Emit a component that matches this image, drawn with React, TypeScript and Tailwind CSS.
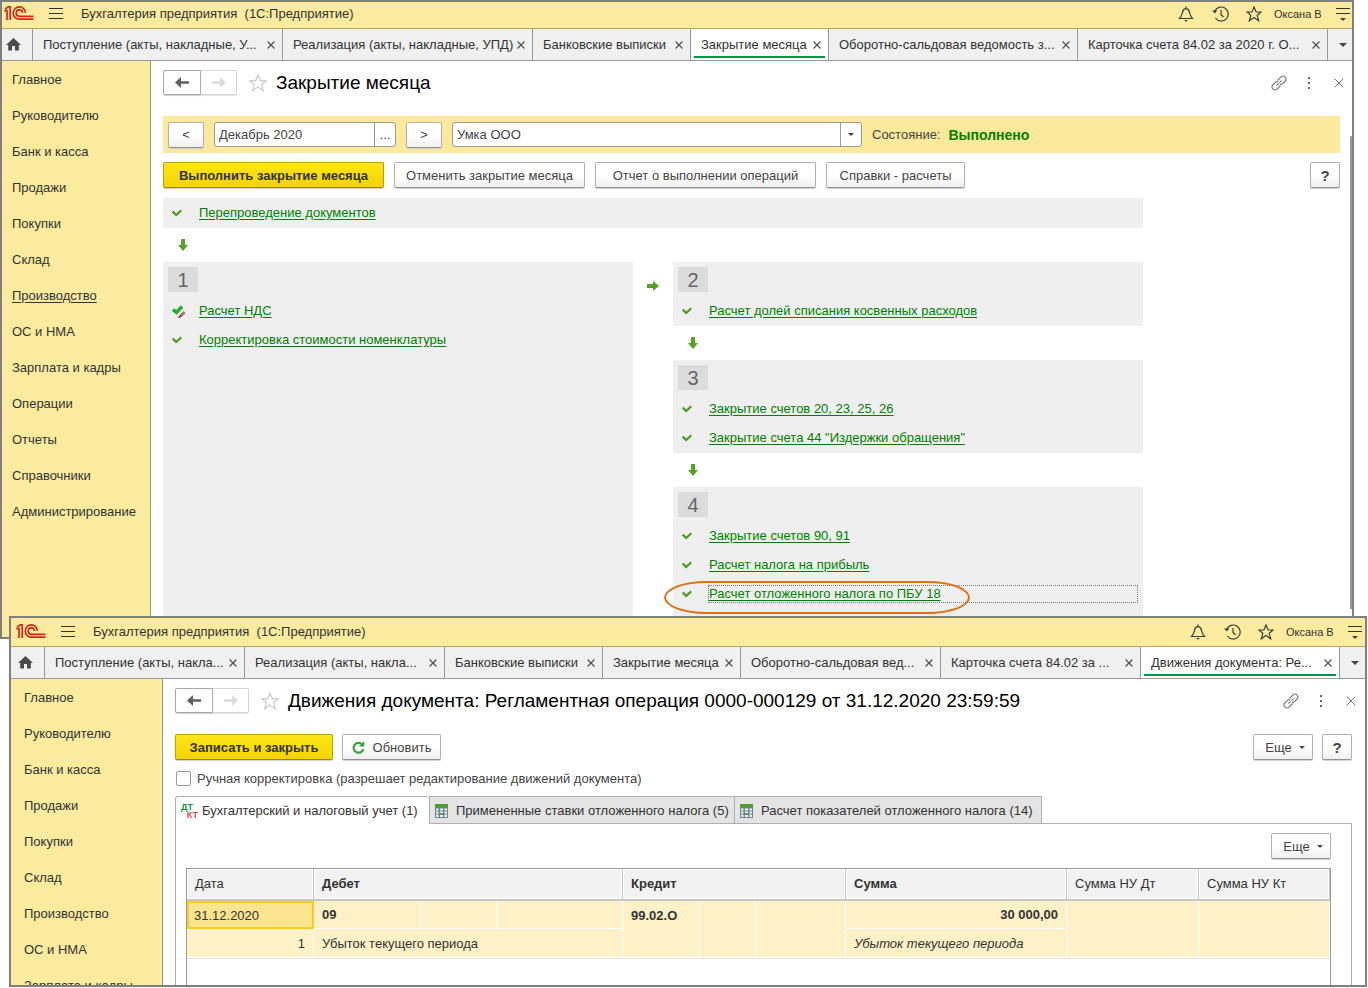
import type { ReactNode } from 'react'

const sections = [
    'Главное',
    'Руководителю',
    'Банк и касса',
    'Продажи',
    'Покупки',
    'Склад',
    'Производство',
    'ОС и НМА',
    'Зарплата и кадры',
    'Операции',
    'Отчеты',
    'Справочники',
    'Администрирование',
]

type Tab = { title: string; width: string; active?: boolean }

const closingTabs: Tab[] = [
    { title: 'Поступление (акты, накладные, У...', width: 'w-[250px]' },
    { title: 'Реализация (акты, накладные, УПД)', width: 'w-[250px]' },
    { title: 'Банковские выписки', width: 'w-[158px]' },
    { title: 'Закрытие месяца', width: 'w-[138px]', active: true },
    { title: 'Оборотно-сальдовая ведомость з...', width: 'w-[249px]' },
    { title: 'Карточка счета 84.02 за 2020 г. О...', width: 'w-[250px]' },
]

const documentTabs: Tab[] = [
    { title: 'Поступление (акты, накла...', width: 'w-[200px]' },
    { title: 'Реализация (акты, накла...', width: 'w-[200px]' },
    { title: 'Банковские выписки', width: 'w-[158px]' },
    { title: 'Закрытие месяца', width: 'w-[138px]' },
    { title: 'Оборотно-сальдовая вед...', width: 'w-[200px]' },
    { title: 'Карточка счета 84.02 за ...', width: 'w-[200px]' },
    { title: 'Движения документа: Ре...', width: 'w-[199px]', active: true },
]

const Logo = () => (
    <svg width="30" height="15" viewBox="0 0 30 15" fill="none" stroke="#d9261c" strokeWidth="1.7">
        <path d="M.2 4.6H3V14M1.200 3.200L4.200 .9H6.200V14" />
        <path d="M21.400 6.900A6.100 6.100 0 1 0 15.300 13.100H29.500" />
        <path d="M18.600 6.900A3.200 3.200 0 1 0 15.300 10.300H29.500" />
    </svg>
)

const Home = () => (
    <svg width="15" height="13" viewBox="0 0 15 13" fill="#4a4a4a">
        <path d="M7.5 0L15 7H12.8V12.5H9V8H6V12.5H2.2V7H0L7.5 0Z" />
    </svg>
)

const Bell = () => (
    <svg width="16" height="16" viewBox="0 0 16 16" fill="none" stroke="#3d3d3d" strokeWidth="1.2">
        <path d="M8 .5V2.5M1.500 12.500H14.500C12.200 10 12 8.500 11.400 6C10.900 3.800 9.600 2.700 8 2.700S5.100 3.800 4.600 6C4 8.500 3.800 10 1.500 12.500Z" />
        <path d="M6 14H10L8 15.800Z" fill="#3d3d3d" stroke="none" />
    </svg>
)

const History = () => (
    <svg width="17" height="16" viewBox="0 0 17 16" fill="none" stroke="#3d3d3d" strokeWidth="1.2">
        <path d="M2.600 5.600A7 7 0 1 1 3.400 12M9 4V8.500L11.500 11" />
        <path d="M0 4.500L5.200 4.200L3 7.600Z" fill="#3d3d3d" stroke="none" />
    </svg>
)

const Star = ({ size, color }: { size: number; color: string }) => (
    <svg width={size} height={size} viewBox="0 0 16 16" fill="none" stroke={color} strokeWidth="1.2">
        <path d="M8 1L10.100 6H15.200L11.200 9.300L12.700 14.800L8 11.600L3.300 14.800L4.800 9.300L.8 6H5.900Z" />
    </svg>
)

const Cross = ({ size, color, weight }: { size: number; color: string; weight: number }) => (
    <svg width={size} height={size} viewBox="0 0 10 10" stroke={color} strokeWidth={weight}>
        <path d="M.7 .7L9.300 9.300M9.300 .7L.7 9.300" />
    </svg>
)

const Caret = ({ size }: { size: number }) => (
    <svg width={size} height={size / 2} viewBox="0 0 10 5" fill="#444">
        <path d="M0 0H10L5 5Z" />
    </svg>
)

const NavArrow = ({ back }: { back?: boolean }) => (
    <svg width="14" height="11" viewBox="0 0 14 11" fill={back ? '#5f5f5f' : '#dcdcdc'}>
        <path d={back ? 'M0 5.500L6 0V4.300H14V6.700H6V11Z' : 'M14 5.500L8 0V4.300H0V6.700H8V11Z'} />
    </svg>
)

const Chain = () => (
    <svg width="16" height="16" viewBox="0 0 16 16" fill="none" stroke="#7a7a7a" strokeWidth="1.200">
        <path d="M5.500 10.500L10.500 5.500" strokeDasharray="3 1" />
        <path d="M6.500 5.500L10 1.900C11 .9 12.700 .5 14 1.900C15.500 3.200 15.200 5 14.200 6L11.800 8.400C11 9.200 10 9.500 9 9.100" />
        <path d="M9.500 10.500L6 14.100C5 15.100 3.300 15.500 2 14.100C.5 12.800 .8 11 1.800 10L4.200 7.600C5 6.800 6 6.500 7 6.900" />
    </svg>
)

const Check = () => (
    <svg width="10" height="8" viewBox="0 0 10 8" fill="none" stroke="#4a9a22" strokeWidth="2.200">
        <path d="M.7 2.600L4.200 6L9.300 1.200" />
    </svg>
)

const ManualCheck = () => (
    <svg width="14" height="13" viewBox="0 0 14 13" fill="none">
        <path d="M1 4.500L4.500 7.500L10 1.500" stroke="#1fae2f" strokeWidth="3.400" />
        <path d="M8.500 11L12.600 7.200" stroke="#a5765c" strokeWidth="3" />
        <path d="M6.600 12.800L9 10.600" stroke="#4a3a33" strokeWidth="1.600" />
    </svg>
)

const DownArrow = () => (
    <svg width="10" height="12" viewBox="0 0 10 12" fill="#55a321">
        <path d="M3 0H7V6H10L5 12L0 6H3Z" />
    </svg>
)

const RightArrow = () => (
    <svg width="12" height="10" viewBox="0 0 12 10" fill="#55a321">
        <path d="M0 3H6V0L12 5L6 10V7H0Z" />
    </svg>
)

const Refresh = () => (
    <svg width="13" height="13" viewBox="0 0 13 13" fill="none">
        <path d="M10 3.200A4.900 4.900 0 1 0 11.300 8" stroke="#37a23c" strokeWidth="2.200" />
        <path d="M12.300 0V5.600H6.800Z" fill="#37a23c" />
    </svg>
)

const Sheet = () => (
    <svg width="13" height="14" viewBox="0 0 13 14" className="shrink-0">
        <path d="M0 0H13V14H0Z" fill="#6f8596" />
        <path d="M1 4.500H3.500V6.500H1ZM5 4.500H8V6.500H5ZM9.500 4.500H12V6.500H9.500ZM1 7.500H3.500V9.500H1ZM5 7.500H8V9.500H5ZM9.500 7.500H12V9.500H9.500ZM1 10.500H3.500V13H1ZM5 11H8V13H5ZM9.500 10.500H12V13H9.500Z" fill="#eef3f7" />
        <path d="M0 0H13V3.500H0ZM4.500 9H8.500V10.500H4.500Z" fill="#4f9f2c" />
    </svg>
)

const DebitCredit = () => (
    <span className="flex w-[17px] flex-col text-left text-[9px] leading-[8px] font-bold">
        <span className="text-[#0c9248]">ДТ</span>
        <span className="self-end text-[#dc4a48]">КТ</span>
    </span>
)

const Button = ({ children, className = '', label }: { children: ReactNode; className?: string; label?: string }) => (
    <button
        type="button"
        aria-label={label}
        className={`flex items-center justify-center h-[26px] shrink-0 rounded-[2px] border border-[#b0b0b0] border-b-[#929292] bg-linear-to-b from-white from-50% to-[#f0f0f0] pt-px shadow-[0_1px_1px_#d0d0d0] whitespace-nowrap text-[#444] ${className}`}
    >
        {children}
    </button>
)

const PrimaryButton = ({ children, className }: { children: ReactNode; className: string }) => (
    <button
        type="button"
        className={`h-[26px] shrink-0 rounded-[2px] border border-[#b8a000] border-b-[#9c8800] bg-linear-to-b from-[#ffe617] to-[#f3d300] pt-px shadow-[0_1px_1px_#d0d0d0] whitespace-nowrap font-bold text-[#333] ${className}`}
    >
        {children}
    </button>
)

const TitleBar = ({ className }: { className: string }) => (
    <header className={`flex items-center border-b border-[#b5a569] bg-[#fbeb9e] ${className}`}>
        <Logo />
        <button type="button" aria-label="Главное меню" className="ml-[15px] flex w-[14px] flex-col gap-1">
            <span className="h-px bg-[#333]"></span>
            <span className="h-px bg-[#333]"></span>
            <span className="h-px bg-[#333]"></span>
        </button>
        <span className="ml-[18px] whitespace-pre">Бухгалтерия предприятия  (1С:Предприятие)</span>
        <div className="ml-auto flex items-center">
            <button type="button" aria-label="Уведомления"><Bell /></button>
            <button type="button" aria-label="История" className="ml-[18px]"><History /></button>
            <button type="button" aria-label="Избранное" className="ml-[17px]"><Star size={16} color="#3d3d3d" /></button>
            <span className="ml-3 w-12 whitespace-nowrap text-[11px]">Оксана В</span>
            <button type="button" aria-label="Настройки" className="ml-[14px] flex w-[14px] flex-col items-center gap-1 pt-[2px]">
                <span className="h-px w-full bg-[#333]"></span>
                <span className="h-px w-full bg-[#333]"></span>
                <Caret size={6} />
            </button>
        </div>
    </header>
)

const TabBar = ({ tabs, homeWidth }: { tabs: Tab[]; homeWidth: string }) => (
    <nav className="flex h-8 shrink-0 border-b border-[#999] bg-[#f0f0f0]">
        <a href="#home" aria-label="Начальная страница" className={`flex shrink-0 items-center border-r border-[#999] ${homeWidth}`}>
            <Home />
        </a>
        {tabs.map((tab) => (
            <div
                key={tab.title}
                className={`flex shrink-0 border-r border-[#999] px-[3px] ${tab.width} ${tab.active ? 'bg-white' : ''}`}
            >
                <div className={`mb-[2px] flex flex-1 items-center justify-between border-b-2 pt-[5px] pr-1 pl-[7px] ${tab.active ? 'border-[#009646]' : 'border-transparent'}`}>
                    <a href="#tab" className="whitespace-nowrap">{tab.title}</a>
                    <button type="button" aria-label={`Закрыть: ${tab.title}`}>
                        <Cross size={8} color="#555" weight={1.6} />
                    </button>
                </div>
            </div>
        ))}
        <button type="button" aria-label="Все вкладки" className="flex flex-1 items-center pl-[11px]">
            <Caret size={8} />
        </button>
    </nav>
)

const Sidebar = ({ className, current }: { className: string; current?: string }) => (
    <nav className={`shrink-0 overflow-hidden border-r border-[#a09868] bg-[#fbeb9e] pt-px ${className}`}>
        {sections.map((name) => (
            <a key={name} href="#section" className={`flex h-9 items-center whitespace-nowrap underline-offset-2 ${name === current ? 'underline' : ''}`}>
                {name}
            </a>
        ))}
    </nav>
)

const FormHeader = ({ title, className }: { title: string; className: string }) => (
    <div className={`mb-[21px] flex h-[25px] items-center ${className}`}>
        <div className="flex">
            <button type="button" aria-label="Назад" className="flex h-[25px] w-[38px] items-center justify-center rounded-l-[2px] border border-[#a8a8a8] shadow-[0_1px_1px_#d0d0d0]">
                <NavArrow back />
            </button>
            <button type="button" aria-label="Вперед" className="flex h-[25px] w-9 items-center justify-center rounded-r-[2px] border border-l-0 border-[#d4d4d4] shadow-[0_1px_1px_#e4e4e4]">
                <NavArrow />
            </button>
        </div>
        <button type="button" aria-label="В избранное" className="ml-3">
            <Star size={18} color="#cfcfcf" />
        </button>
        <h1 className="ml-[9px] whitespace-nowrap text-[19px] text-black">{title}</h1>
        <div className="ml-auto flex items-center">
            <button type="button" aria-label="Получить ссылку"><Chain /></button>
            <button type="button" aria-label="Дополнительно" className="ml-5 flex w-1 flex-col items-center gap-[3px]">
                <span className="size-[2px] bg-[#666]"></span>
                <span className="size-[2px] bg-[#666]"></span>
                <span className="size-[2px] bg-[#666]"></span>
            </button>
            <button type="button" aria-label="Закрыть" className="ml-[23px]"><Cross size={10} color="#777" weight={1} /></button>
        </div>
    </div>
)

const Operation = ({ name, manual, focused }: { name: string; manual?: boolean; focused?: boolean }) => (
    <li className="flex h-[29px] items-center pr-[5px] pl-[9px]">
        <span className="w-[26px] shrink-0 pt-px">{manual ? <ManualCheck /> : <Check />}</span>
        <span className={`flex-1 border border-dotted leading-4 ${focused ? 'border-[#777]' : 'border-transparent'}`}>
            <a href="#operation" className="whitespace-nowrap text-[#008000] underline underline-offset-2">{name}</a>
        </span>
    </li>
)

const Step = ({ number, children, className = '' }: { number: number; children: ReactNode; className?: string }) => (
    <section className={`bg-[#efefef] pt-[5px] pb-px ${className}`}>
        <h2 className="mb-1 ml-[5px] flex h-[25px] w-[30px] items-center justify-center bg-[#dcdcdc] text-[20px] text-[#666]">
            {number}
        </h2>
        <ul>{children}</ul>
    </section>
)

const StepArrow = () => (
    <div className="flex h-[34px] items-center pl-[15px]">
        <DownArrow />
    </div>
)

const MonthClosing = () => (
    <main className="min-w-0 flex-1 pt-[9px] pl-3">
        <FormHeader title="Закрытие месяца" className="pr-[6px]" />
        <div className="mr-[10px] flex h-[37px] items-center bg-[#fce99c] pl-[5px] text-[#444]">
            <Button className="w-9" label="Предыдущий месяц">&lt;</Button>
            <div className="ml-[10px] flex h-[25px] w-[182px] rounded-[3px] border border-[#999] bg-white">
                <input aria-label="Период" defaultValue="Декабрь 2020" className="min-w-0 flex-1 px-1 pt-px outline-none" />
                <button type="button" aria-label="Выбрать период" className="w-[21px] border-l border-[#999]">...</button>
            </div>
            <Button className="ml-[10px] w-9" label="Следующий месяц">&gt;</Button>
            <div className="ml-[10px] flex h-[25px] w-[410px] items-center rounded-[3px] border border-[#999] bg-white">
                <select aria-label="Организация" className="h-full flex-1 appearance-none px-1 pt-px outline-none">
                    <option>Умка ООО</option>
                </select>
                <span className="flex h-full w-[21px] items-center justify-center border-l border-[#999]">
                    <Caret size={6} />
                </span>
            </div>
            <span className="ml-[10px]">Состояние:</span>
            <strong className="ml-2 text-[14px] text-[#008000]">Выполнено</strong>
        </div>
        <div className="mt-[9px] mr-[10px] mb-[10px] flex gap-[10px]">
            <PrimaryButton className="w-[221px]">Выполнить закрытие месяца</PrimaryButton>
            <Button className="w-[191px]">Отменить закрытие месяца</Button>
            <Button className="w-[221px]">Отчет о выполнении операций</Button>
            <Button className="w-[139px]">Справки - расчеты</Button>
            <Button className="ml-auto w-[30px] text-[15px] font-bold" label="Справка">?</Button>
        </div>
        <div className="w-[980px]">
            <ul className="bg-[#efefef] pb-px">
                <Operation name="Перепроведение документов" />
            </ul>
            <StepArrow />
            <div className="flex">
                <Step number={1} className="w-[470px]">
                    <Operation name="Расчет НДС" manual />
                    <Operation name="Корректировка стоимости номенклатуры" />
                </Step>
                <div className="flex w-10 justify-center pt-[19px]">
                    <RightArrow />
                </div>
                <div className="flex-1">
                    <Step number={2}>
                        <Operation name="Расчет долей списания косвенных расходов" />
                    </Step>
                    <StepArrow />
                    <Step number={3}>
                        <Operation name="Закрытие счетов 20, 23, 25, 26" />
                        <Operation name={'Закрытие счета 44 "Издержки обращения"'} />
                    </Step>
                    <StepArrow />
                    <Step number={4} className="relative">
                        <Operation name="Закрытие счетов 90, 91" />
                        <Operation name="Расчет налога на прибыль" />
                        <Operation name="Расчет отложенного налога по ПБУ 18" focused />
                        <li className="h-7 list-none"></li>
                        <span className="absolute top-[94px] -left-[9px] h-[33px] w-[306px] rounded-[44px/17px] border-2 border-[#e0700f]"></span>
                    </Step>
                </div>
            </div>
        </div>
    </main>
)

const MoreButton = ({ className = '' }: { className?: string }) => (
    <Button className={`w-[60px] gap-[7px] pl-1 ${className}`}>
        Еще
        <Caret size={6} />
    </Button>
)

const registerTabs = [
    { name: 'Примененные ставки отложенного налога (5)', width: 'w-[305px]' },
    { name: 'Расчет показателей отложенного налога (14)', width: 'w-[307px]' },
]

const headCell = 'border-r border-b-2 border-[#c6c6c6] bg-[#f2f2f2] px-2 text-left shadow-[inset_0_0_0_1px_#fff]'
const cell = 'border-r border-b border-white px-2 pt-px'

const Entries = () => (
    <table className="w-full table-fixed border-separate border-spacing-0">
        <colgroup>
            <col className="w-[127px]" />
            <col className="w-[107px]" />
            <col className="w-[77px]" />
            <col className="w-[125px]" />
            <col className="w-[77px]" />
            <col className="w-[56px]" />
            <col className="w-[90px]" />
            <col className="w-[221px]" />
            <col className="w-[132px]" />
            <col />
        </colgroup>
        <thead>
            <tr className="h-8">
                <th className={`${headCell} font-normal`}>Дата</th>
                <th colSpan={3} className={headCell}>Дебет</th>
                <th colSpan={3} className={headCell}>Кредит</th>
                <th className={headCell}>Сумма</th>
                <th className={`${headCell} font-normal`}>Сумма НУ Дт</th>
                <th className={`${headCell} font-normal`}>Сумма НУ Кт</th>
            </tr>
        </thead>
        <tbody className="bg-[#fef1c7]">
            <tr className="h-7">
                <td className="border-2 border-[#fcca1e] bg-[#fbe48f] px-[5px] pt-px">31.12.2020</td>
                <td className={`${cell} font-bold`}>09</td>
                <td className={cell}></td>
                <td className={cell}></td>
                <td rowSpan={2} className="border-r border-b border-white px-2 pt-[7px] align-top font-bold">99.02.О</td>
                <td rowSpan={2} className={cell}></td>
                <td rowSpan={2} className={cell}></td>
                <td className={`${cell} text-right font-bold`}>30 000,00</td>
                <td rowSpan={2} className={cell}></td>
                <td rowSpan={2} className={cell}></td>
            </tr>
            <tr className="h-[29px]">
                <td className={`${cell} text-right`}>1</td>
                <td colSpan={3} className={cell}>Убыток текущего периода</td>
                <td className={`${cell} italic`}>Убыток текущего периода</td>
            </tr>
        </tbody>
    </table>
)

const DocumentEntries = () => (
    <main className="flex min-w-0 flex-1 flex-col pt-[9px] pr-[13px] pl-3">
        <FormHeader title="Движения документа: Регламентная операция 0000-000129 от 31.12.2020 23:59:59" className="-mr-1" />
        <div className="flex gap-[9px]">
            <PrimaryButton className="w-[158px]">Записать и закрыть</PrimaryButton>
            <Button className="w-[99px] gap-2">
                <Refresh />
                Обновить
            </Button>
            <MoreButton className="ml-auto" />
            <Button className="w-[30px] text-[15px] font-bold" label="Справка">?</Button>
        </div>
        <label className="mt-[11px] mb-[10px] flex h-[15px] items-center gap-[6px] pl-px text-[#444]">
            <input type="checkbox" className="size-[15px] appearance-none rounded-[2px] border border-[#999] bg-white" />
            Ручная корректировка (разрешает редактирование движений документа)
        </label>
        <div role="tablist" className="flex h-7 shrink-0">
            <button type="button" role="tab" aria-selected="true" className="flex w-[254px] items-center gap-1 rounded-t-[3px] border-t border-l border-[#b0b0b0] pl-[5px] whitespace-nowrap">
                <DebitCredit />
                Бухгалтерский и налоговый учет (1)
            </button>
            {registerTabs.map((tab) => (
                <button key={tab.name} type="button" role="tab" className={`flex items-center gap-2 border border-r-0 border-[#b0b0b0] bg-[#e4e4e4] pt-px pl-[5px] whitespace-nowrap ${tab.width}`}>
                    <Sheet />
                    {tab.name}
                </button>
            ))}
            <span className="flex-1 border-b border-l border-[#b0b0b0]"></span>
        </div>
        <div className="flex flex-1 flex-col border-x border-[#b0b0b0] px-[10px] pt-[9px]">
            <MoreButton className="mr-[10px] self-end" />
            <div className="mt-[9px] mr-[10px] flex-1 border border-b-0 border-[#999]">
                <div className="border-b border-[#dedede]">
                    <Entries />
                </div>
            </div>
        </div>
    </main>
)

const App = () => {
    return (
        <div className="flex h-screen flex-col overflow-hidden bg-white pr-px pb-px font-['Liberation_Sans',Arial,sans-serif] text-[13px] leading-4 text-[#333]">
            <div className="mr-[13px] shrink-0 border-2 border-[#7f7f7f] bg-white">
                <TitleBar className="h-[27px] pr-[2px] pb-[3px] pl-[2px]" />
                <TabBar tabs={closingTabs} homeWidth="w-[31px] pl-1" />
                <div className="flex">
                    <Sidebar className="w-[149px] pl-[10px]" current="Производство" />
                    <MonthClosing />
                    <span className="mt-[75px] mb-7 w-[2px] rounded-t-full bg-[#999]"></span>
                </div>
            </div>
            <div className="relative -mt-[23px] ml-[9px] flex min-h-0 flex-1 flex-col border-2 border-[#7f7f7f] bg-white">
                <TitleBar className="h-[29px] shrink-0 pr-[3px] pb-px pl-[5px]" />
                <TabBar tabs={documentTabs} homeWidth="w-[34px] pl-[7px]" />
                <div className="flex min-h-0 flex-1">
                    <Sidebar className="w-[152px] pl-[13px]" />
                    <DocumentEntries />
                </div>
            </div>
        </div>
    )
}

export default App
